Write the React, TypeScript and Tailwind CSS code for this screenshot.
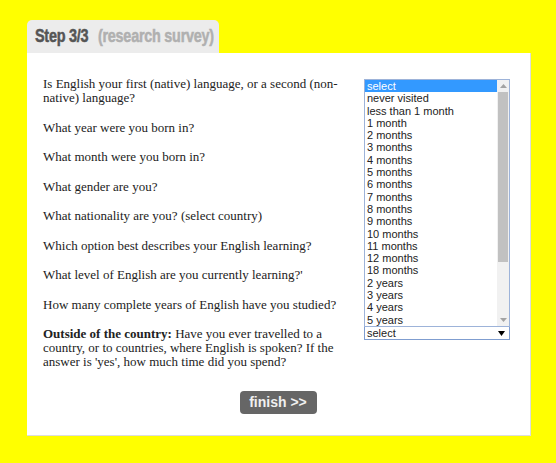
import React from 'react';

const questions: React.ReactNode[] = [
  'Is English your first (native) language, or a second (non-native) language?',
  'What year were you born in?',
  'What month were you born in?',
  'What gender are you?',
  'What nationality are you? (select country)',
  'Which option best describes your English learning?',
  "What level of English are you currently learning?'",
  'How many complete years of English have you studied?',
  <>
    <b>Outside of the country:</b> Have you ever travelled to a country, or to countries, where English is
    spoken? If the answer is 'yes', how much time did you spend?
  </>,
];

const options = [
  'select',
  'never visited',
  'less than 1 month',
  '1 month',
  '2 months',
  '3 months',
  '4 months',
  '5 months',
  '6 months',
  '7 months',
  '8 months',
  '9 months',
  '10 months',
  '11 months',
  '12 months',
  '18 months',
  '2 years',
  '3 years',
  '4 years',
  '5 years',
];

function TimeList() {
  return (
    <div className="w-[146px] font-['Liberation_Sans',Arial,sans-serif] text-[11px] leading-[12.3px] text-[#222]">
      {/* open dropdown list */}
      <div className="flex h-[248px] border border-[#9db3d9] bg-white">
        <div className="flex-1 overflow-hidden">
          {options.map((o, i) => (
            <div
              key={o}
              className={
                i === 0 ? 'bg-[#3399ff] pl-[2px] text-white' : 'pl-[2px]'
              }
            >
              {o}
            </div>
          ))}
        </div>
        <div className="flex w-[12px] flex-col bg-[#f1f1f1]">
          <div className="flex h-[12px] items-center justify-center">
            <svg width="7" height="4" viewBox="0 0 7 4">
              <path d="M0 4 L3.5 0 L7 4 Z" fill="#a3a3a3" />
            </svg>
          </div>
          <div className="mx-[1px] h-[170px] bg-[#c1c1c1]" />
          <div className="flex-1" />
          <div className="flex h-[12px] items-center justify-center">
            <svg width="7" height="4" viewBox="0 0 7 4">
              <path d="M0 0 L3.5 4 L7 0 Z" fill="#a3a3a3" />
            </svg>
          </div>
        </div>
      </div>
      {/* closed select */}
      <div className="flex h-[13px] items-center justify-between border border-t-0 border-[#7f9dd0] bg-white pl-[2px] pr-[4px]">
        <span>select</span>
        <svg width="7" height="5" viewBox="0 0 7 5">
          <path d="M0 0 L3.5 5 L7 0 Z" fill="#000" />
        </svg>
      </div>
    </div>
  );
}

export default function App() {
  return (
    <div className="min-h-[463px] bg-[#ffff00] px-[27px] pt-[20px] pb-[29px]">
      <div className="flex h-[33px] w-[192px] items-center overflow-hidden rounded-t-[5px] bg-[#ececec] pl-[8px]">
        <span className="origin-left scale-x-[0.8] whitespace-nowrap font-['Liberation_Sans',Arial,sans-serif] text-[18px] font-bold tracking-[-0.3px] [-webkit-text-stroke:0.5px]">
          <span className="text-[#555]">Step 3/3</span>
          <span className="ml-[12px] text-[#b0b0b0]">(research survey)</span>
        </span>
      </div>
      <div className="w-[504px] border-r border-b border-[#dddddd] bg-white pt-[24px] pr-[20px] pb-[21px] pl-[16px]">
        <div className="flex gap-[14px]">
          <div className="w-[308px] font-['Liberation_Serif','Times_New_Roman',serif] text-[13px] leading-[14px] text-[#222]">
            {questions.map((q, i) => (
              <p key={i} className="mb-[15.5px]">
                {q}
              </p>
            ))}
          </div>
          <div className="pt-[2px]">
            <TimeList />
          </div>
        </div>
        <div className="mt-[6px] flex justify-center pl-[3px]">
          <button className="h-[23px] w-[77px] rounded-[4px] bg-[#666666] font-['Liberation_Sans',Arial,sans-serif] text-[14px] font-bold text-[#f0f0f0]">
            finish &gt;&gt;
          </button>
        </div>
      </div>
    </div>
  );
}
